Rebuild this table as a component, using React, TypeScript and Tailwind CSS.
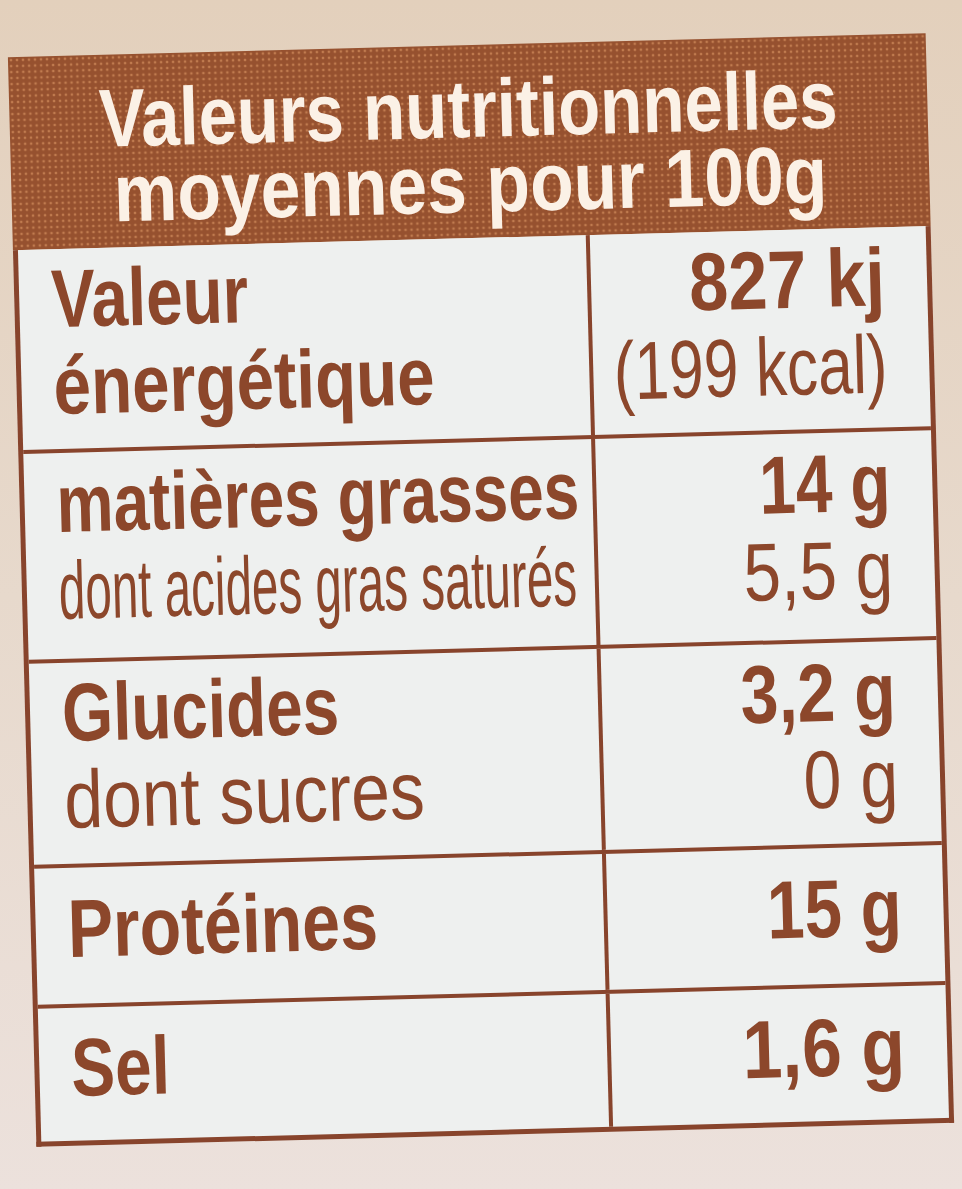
import React from "react";

type Line = { text: string; bold: boolean; sx: number };
type Row = { h: string; pt: string; top: boolean; left: Line[]; right: Line[] };

const rows: Row[] = [
  {
    h: "h-[200px]",
    pt: "pt-[6px]",
    top: false,
    left: [
      { text: "Valeur", bold: true, sx: 0.8 },
      { text: "énergétique", bold: true, sx: 0.82 },
    ],
    right: [
      { text: "827 kj", bold: true, sx: 0.86 },
      { text: "(199 kcal)", bold: false, sx: 0.76 },
    ],
  },
  {
    h: "h-[210px]",
    pt: "pt-[7px]",
    top: true,
    left: [
      { text: "matières grasses", bold: true, sx: 0.78 },
      { text: "dont acides gras saturés", bold: false, sx: 0.58 },
    ],
    right: [
      { text: "14 g", bold: true, sx: 0.8 },
      { text: "5,5 g", bold: false, sx: 0.82 },
    ],
  },
  {
    h: "h-[205px]",
    pt: "pt-[6px]",
    top: true,
    left: [
      { text: "Glucides", bold: true, sx: 0.8 },
      { text: "dont sucres", bold: false, sx: 0.85 },
    ],
    right: [
      { text: "3,2 g", bold: true, sx: 0.83 },
      { text: "0 g", bold: false, sx: 0.83 },
    ],
  },
  {
    h: "h-[140px]",
    pt: "pt-[17px]",
    top: true,
    left: [{ text: "Protéines", bold: true, sx: 0.83 }],
    right: [{ text: "15 g", bold: true, sx: 0.82 }],
  },
  {
    h: "h-[137px]",
    pt: "pt-[16px]",
    top: true,
    left: [{ text: "Sel", bold: true, sx: 0.8 }],
    right: [{ text: "1,6 g", bold: true, sx: 0.87 }],
  },
];

function TextLine({ line, align }: { line: Line; align: "left" | "right" }) {
  return (
    <div className={align === "left" ? "flex justify-start" : "flex justify-end"}>
      <span
        className={
          (align === "left" ? "origin-left " : "origin-right ") +
          "inline-block shrink-0 whitespace-nowrap " +
          (line.bold ? "font-bold" : "font-normal")
        }
        style={{ transform: `scaleX(${line.sx})` }}
      >
        {line.text}
      </span>
    </div>
  );
}

export default function App() {
  return (
    <div className="h-[1189px] w-full overflow-hidden bg-gradient-to-b from-[#e3d0bc] via-[#e7d9cc] to-[#ece1dc] pl-[22px] pt-[45px] font-['Liberation_Sans',Arial,sans-serif]">
      <div className="w-[918px] rotate-[-1.5deg]">
        <div className="h-[193px] bg-[#96512f] bg-[radial-gradient(circle,#c07b4f_1.1px,transparent_1.7px)] bg-[length:6px_6px] pt-[26px] text-center text-[82px] font-bold leading-[75px] text-[#fbf1e6]">
          <div className="flex justify-center">
            <span className="inline-block shrink-0 whitespace-nowrap scale-x-[0.84]">Valeurs nutritionnelles</span>
          </div>
          <div className="flex justify-center">
            <span className="inline-block shrink-0 whitespace-nowrap scale-x-[0.87]">moyennes pour 100g</span>
          </div>
        </div>
        <div className="border-x-[5px] border-b-[5px] border-[#88442c] bg-[#eef0ef] text-[82px] leading-[87px] text-[#8c472b]">
          {rows.map((r, i) => (
            <div
              key={i}
              className={
                "grid grid-cols-[568px_minmax(0,1fr)] " +
                r.h +
                (r.top ? " border-t-[4px] border-[#88442c]" : "")
              }
            >
              <div className={"pl-[32px] " + r.pt}>
                {r.left.map((l, j) => (
                  <TextLine key={j} line={l} align="left" />
                ))}
              </div>
              <div className={"border-l-[4px] border-[#88442c] pr-[42px] " + r.pt}>
                {r.right.map((l, j) => (
                  <TextLine key={j} line={l} align="right" />
                ))}
              </div>
            </div>
          ))}
        </div>
      </div>
    </div>
  );
}
